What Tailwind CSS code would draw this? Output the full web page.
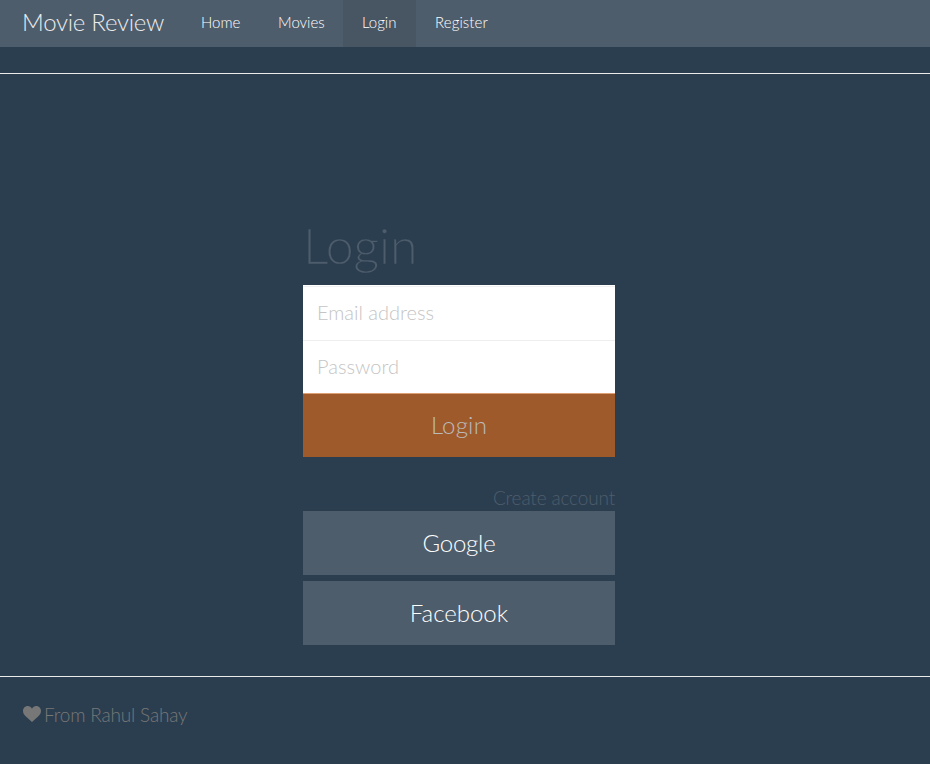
<!DOCTYPE html>
<html lang="en"><head><meta charset="utf-8"><title>Movie Review</title>
<script src="https://cdn.jsdelivr.net/npm/@tailwindcss/browser@4"></script></head>
<body class="bg-[#2b3e50] text-[#ebebeb] h-[764px] overflow-hidden font-['Lato',sans-serif] font-light">
<nav class="h-[47px] bg-[#4e5d6c] flex items-stretch whitespace-nowrap">
<a class="w-[182px] pl-[22px] text-[24px] leading-[43px] tracking-[-0.26px]">Movie Review</a>
<a class="w-[77px] pl-[19px] text-[15px] leading-[45px] text-white">Home</a>
<a class="w-[84px] pl-[19px] text-[15px] leading-[45px] text-white">Movies</a>
<a class="w-[73px] pl-[19px] text-[15px] leading-[45px] text-white bg-[#485563]">Login</a>
<a class="w-[91px] pl-[19px] text-[15px] leading-[45px] text-white tracking-[0.1px]">Register</a>
</nav>
<hr class="mt-[26px] border-0 h-px bg-[#ebebeb]">
<main class="w-[312px] ml-[303px] h-[602px] pt-[141px]">
<h1 class="text-[50px] leading-[60px] h-[70px] font-light tracking-[-0.1px] text-[#4e5d6c] [-webkit-text-stroke:0.3px_#2b3e50]">Login</h1>
<form>
<input class="block w-full h-[55px] bg-white px-[14px] pb-[2px] text-[20px] shadow-[inset_0_1px_0_#fff,inset_0_2px_0_#f0f0f0] placeholder:text-[#c4c4c4]" placeholder="Email address">
<input class="block w-full h-[53px] bg-white px-[14px] pb-[2px] text-[20px] border-t border-[#eeeeee] tracking-[0.05px] placeholder:text-[#c4c4c4]" placeholder="Password">
<button type="button" class="block w-full h-[64px] pb-[2px] bg-[#9f5a2c] border-t border-[#df9f74] text-[#bbb] text-[24px] tracking-[0.2px]">Login</button>
</form>
<a class="block text-right text-[19px] leading-[24px] tracking-[-0.15px] mt-[29px] h-[25px] text-[#4e5d6c]">Create account</a>
<button class="block w-full h-[64px] bg-[#4e5d6c] text-white text-[24px] tracking-[-0.2px]">Google</button>
<button class="block w-full h-[64px] mt-[6px] bg-[#4e5d6c] text-white text-[24px]">Facebook</button>
</main>
<hr class="border-0 h-px bg-[#ebebeb]">
<footer class="pt-[26px] pl-[23px] flex text-[19px] leading-[24px] text-[#777777]">
<svg class="w-[18px] h-[16px] mt-[3px] mr-[3px]" viewBox="0 0 18 16" fill="currentColor"><path d="M9 2.700C8 .8 6.500 0 4.800 0 2 0 0 2.200 0 5c0 2.500 1.500 4.200 3.200 5.700L9 16l5.800-5.300C16.500 9.200 18 7.500 18 5c0-2.800-2-5-4.800-5C11.500 0 10 .8 9 2.700z"/></svg>
<span class="tracking-[-0.17px]">From Rahul Sahay</span></footer>
</body></html>
